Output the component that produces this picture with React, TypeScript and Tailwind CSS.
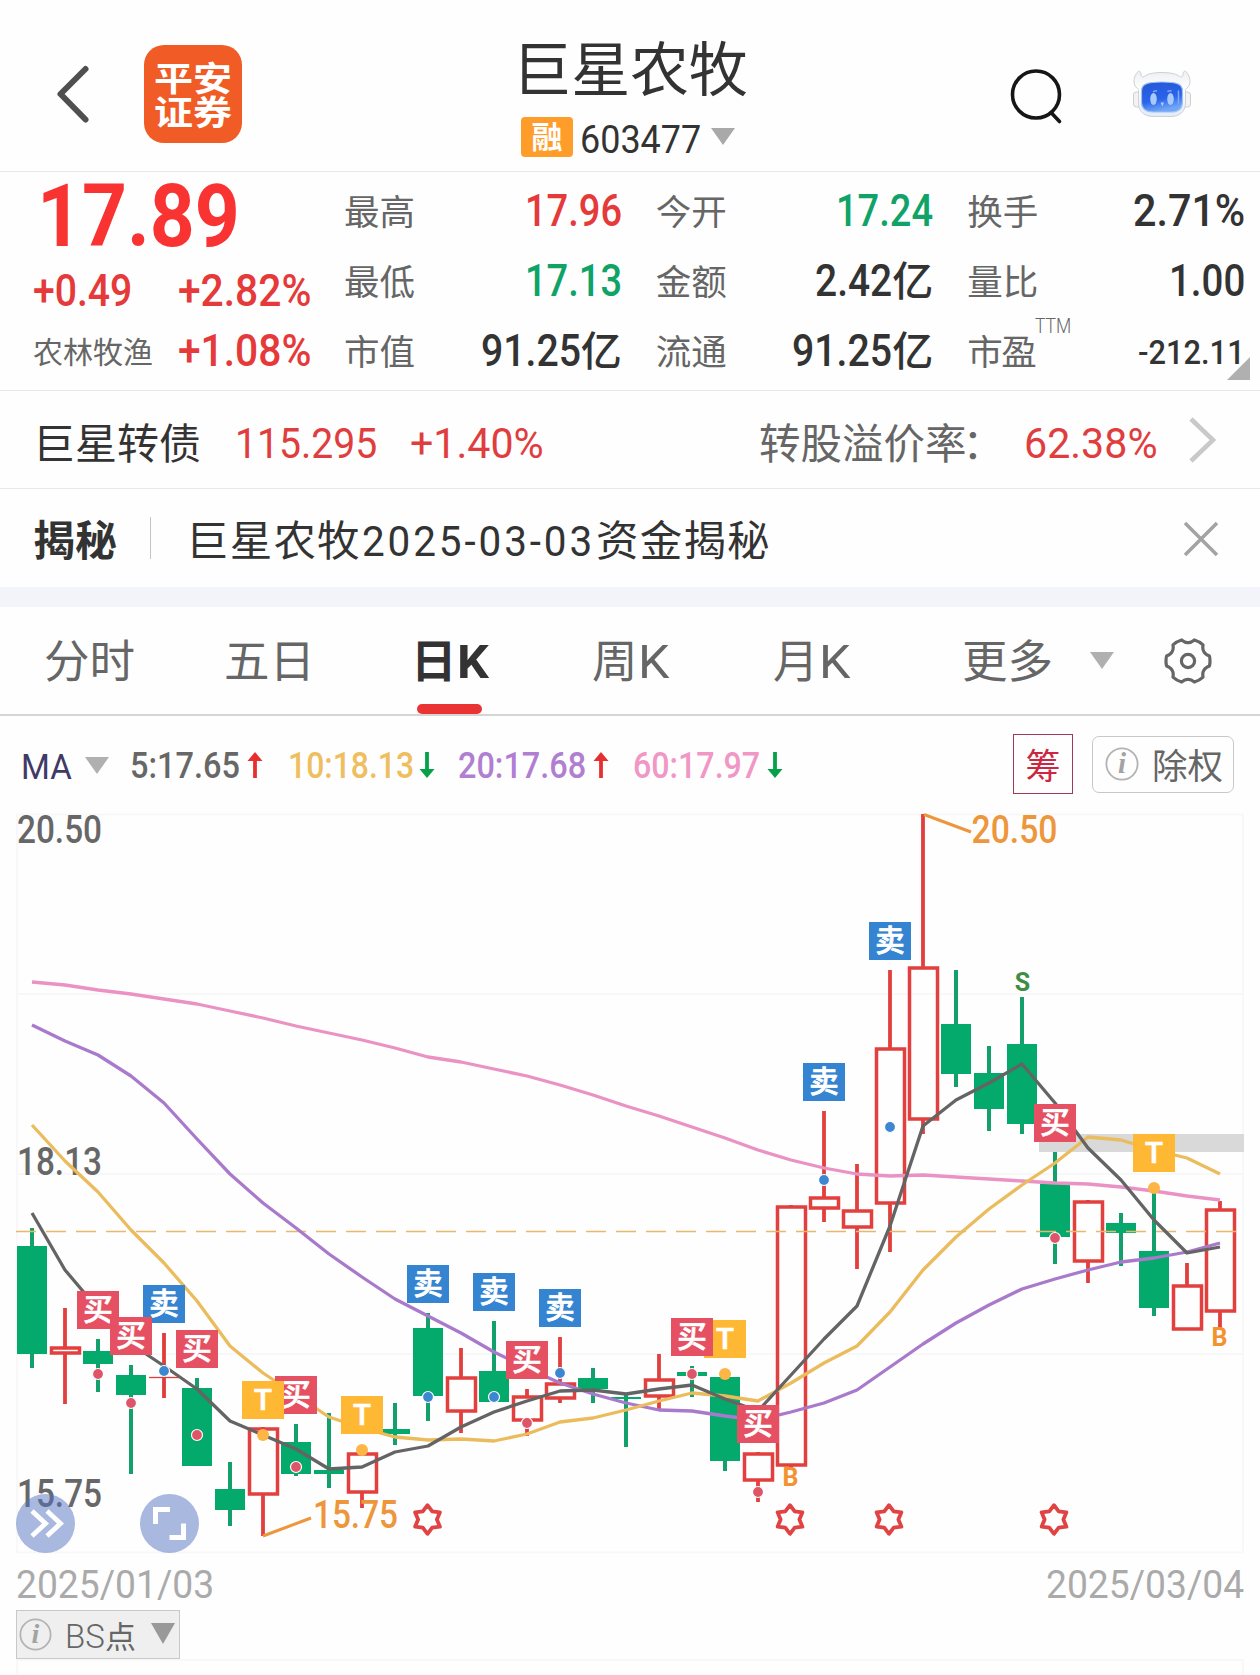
import { useLayoutEffect, useRef, type ReactNode } from "react";

/* Single line of text, condensed or widened so that it fills the width of its box. */
function Fit({ className = "", children }: { className?: string; children: ReactNode }) {
  const box = useRef<HTMLSpanElement>(null);
  const text = useRef<HTMLSpanElement>(null);
  useLayoutEffect(() => {
    if (!box.current || !text.current) return;
    const natural = text.current.offsetWidth;
    if (natural > 0) text.current.style.transform = `scaleX(${box.current.clientWidth / natural})`;
  }, [children]);
  return (
    <span ref={box} className={`block shrink-0 leading-none ${className}`}>
      <span ref={text} className="inline-block origin-left align-top whitespace-nowrap">
        {children}
      </span>
    </span>
  );
}

function Triangle({ className = "" }: { className?: string }) {
  return (
    <svg viewBox="0 0 24 17" className={`h-[17px] w-6 shrink-0 ${className}`}>
      <path d="M0 0h24L12 17z" fill="currentColor" />
    </svg>
  );
}

function InfoIcon({ className = "" }: { className?: string }) {
  return (
    <svg viewBox="0 0 34 34" className={`shrink-0 ${className}`} fill="none">
      <circle cx="17" cy="17" r="15.6" stroke="#b3b3b3" strokeWidth="1.800" />
      <text x="17" y="26" textAnchor="middle" fontFamily="Liberation Serif, serif" fontStyle="italic" fontWeight="bold" fontSize="29" fill="#a3a3a3">
        i
      </text>
    </svg>
  );
}

function gearPath() {
  const pt = (deg: number, r: number) => {
    const a = (deg * Math.PI) / 180;
    return `${(24 + r * Math.sin(a)).toFixed(2)} ${(24 - r * Math.cos(a)).toFixed(2)}`;
  };
  let d = "";
  for (let k = 0; k < 6; k++) {
    const n = k * 60;
    d += `${k ? "L" : "M"}${pt(n - 17, 22)}Q${pt(n - 9, 18.4)} ${pt(n, 18.4)}Q${pt(n + 9, 18.4)} ${pt(n + 17, 22)}`;
    d += `Q${pt(n + 30, 22.6)} ${pt(n + 43, 22)}`;
  }
  return d + "Z";
}

function Robot() {
  return (
    <svg viewBox="0 0 60 50" className="h-[50px] w-[60px]" fill="none">
      <defs>
        <linearGradient id="face" x1="0" y1="0" x2="0.3" y2="1">
          <stop offset="0" stopColor="#2457d4" />
          <stop offset="0.65" stopColor="#2964ea" />
          <stop offset="1" stopColor="#6fa6f6" />
        </linearGradient>
        <linearGradient id="shell" x1="0" y1="0" x2="0" y2="1">
          <stop offset="0" stopColor="#eeeff2" />
          <stop offset="0.4" stopColor="#ffffff" />
          <stop offset="1" stopColor="#e2ebf8" />
        </linearGradient>
      </defs>
      <rect x="1.500" y="23" width="9" height="15" rx="3" fill="#f7f2f2" stroke="#d0cdd1" />
      <rect x="49.500" y="23" width="9" height="15" rx="3" fill="#f7f2f2" stroke="#d0cdd1" />
      <path
        d="M6 2.500C1 8 .5 16 5.500 19.500C7 20 6.500 22 6.500 25V35C7 43 13 47.500 21 47.500H39C47 47.500 53 43 53.500 35V25C53.500 22 53 20 54.500 19.500C59.500 16 59 8 54 2.500C52 1.500 51 3 51 6C50.500 9 48 8 46 6.500C41 2.500 19 2.500 14 6.500C12 8 9.500 9 9 6C9 3 8 1.500 6 2.500Z"
        fill="url(#shell)"
        stroke="#cdd1d8"
      />
      <path d="M9.500 22C9.500 15 15 13 30 13S50.500 15 50.500 22V33C50.500 40 46 43 39 43H21C14 43 9.500 40 9.500 33Z" fill="url(#face)" stroke="#9fc0f2" strokeWidth="1.200" />
      <ellipse cx="21.500" cy="30" rx="3.300" ry="6" fill="#a9c9fa" />
      <ellipse cx="38.500" cy="30" rx="3.300" ry="6" fill="#a9c9fa" />
      <path d="M28.500 33.500h3.500l-1.700 4z" fill="#a9cbfb" />
      <path d="M46.500 22v12M21.500 22.500l3-.8M39 21.800l-3 .5" stroke="#7fa9f5" strokeWidth="1.500" strokeLinecap="round" />
    </svg>
  );
}

function Stat({ label, children }: { label: ReactNode; children: ReactNode }) {
  return (
    <div className="flex h-[70px] items-center justify-between">
      <span className="mt-[5px] -ml-px text-[35.500px] leading-none font-normal whitespace-nowrap text-[#666]">{label}</span>
      <div className="mt-[2px] flex">{children}</div>
    </div>
  );
}

function Arrow({ up = false, className = "" }: { up?: boolean; className?: string }) {
  return (
    <svg viewBox="0 0 16 26" className={`h-[26px] w-4 shrink-0 ${className}`} fill="none">
      {up ? (
        <path d="M8 26V6" stroke="#e6302f" strokeWidth="3.800" />
      ) : (
        <path d="M8 0V20" stroke="#06a048" strokeWidth="3.800" />
      )}
      {up ? <path d="M0.500 9L8 0L15.500 9Z" fill="#e6302f" /> : <path d="M0.500 17L8 26L15.500 17Z" fill="#06a048" />}
    </svg>
  );
}

type Candle = [up: 0 | 1, high: number, top: number, bottom: number, low: number];

const candles: Candle[] = [
  [0, 1228, 1246, 1354, 1368],
  [1, 1308, 1346, 1354, 1404],
  [0, 1339, 1351, 1364, 1392],
  [0, 1365, 1375, 1395, 1474],
  [1, 1333, 1377, 1378, 1398],
  [0, 1378, 1388, 1466, 1466],
  [0, 1462, 1489, 1510, 1526],
  [1, 1427, 1427, 1495, 1536],
  [0, 1424, 1442, 1474, 1476],
  [0, 1413, 1470, 1474, 1488],
  [1, 1452, 1452, 1493, 1508],
  [0, 1403, 1429, 1434, 1445],
  [0, 1313, 1328, 1396, 1421],
  [1, 1348, 1376, 1412, 1433],
  [0, 1321, 1371, 1402, 1402],
  [1, 1389, 1395, 1421, 1436],
  [1, 1337, 1382, 1399, 1403],
  [0, 1368, 1378, 1389, 1403],
  [0, 1393, 1397, 1399, 1447],
  [1, 1354, 1378, 1397, 1410],
  [0, 1366, 1372, 1376, 1397],
  [0, 1377, 1377, 1461, 1471],
  [1, 1452, 1452, 1481, 1502],
  [1, 1205, 1205, 1466, 1468],
  [1, 1111, 1196, 1209, 1222],
  [1, 1164, 1209, 1228, 1269],
  [1, 970, 1047, 1204, 1252],
  [1, 814, 966, 1120, 1134],
  [0, 970, 1024, 1074, 1087],
  [0, 1046, 1073, 1109, 1131],
  [0, 997, 1044, 1124, 1134],
  [0, 1152, 1184, 1237, 1264],
  [1, 1200, 1200, 1262, 1283],
  [0, 1213, 1223, 1233, 1266],
  [0, 1190, 1251, 1308, 1316],
  [1, 1263, 1284, 1330, 1330],
  [1, 1201, 1208, 1312, 1328],
];

const averages = [
  {
    color: "#ea92c3",
    ys: [982, 985, 990, 994, 999, 1004, 1011, 1018, 1026, 1033, 1040, 1048, 1057, 1062, 1069, 1076, 1085, 1095, 1106, 1116, 1127, 1138, 1150, 1160, 1168, 1174, 1176, 1175, 1177, 1179, 1181, 1183, 1184, 1187, 1191, 1196, 1200],
  },
  {
    color: "#a97acb",
    ys: [1025, 1041, 1055, 1076, 1103, 1139, 1174, 1203, 1228, 1254, 1277, 1299, 1316, 1333, 1352, 1368, 1383, 1394, 1403, 1410, 1411, 1416, 1420, 1412, 1403, 1390, 1367, 1344, 1323, 1305, 1289, 1279, 1270, 1262, 1258, 1252, 1243],
  },
  {
    color: "#ebbc5d",
    ys: [1125, 1161, 1192, 1230, 1263, 1301, 1346, 1373, 1395, 1417, 1428, 1437, 1440, 1439, 1441, 1434, 1422, 1418, 1410, 1401, 1393, 1396, 1401, 1383, 1363, 1346, 1312, 1270, 1237, 1209, 1185, 1163, 1137, 1140, 1150, 1158, 1174],
  },
  {
    color: "#646464",
    ys: [1213, 1270, 1309, 1344, 1366, 1389, 1421, 1435, 1449, 1469, 1467, 1452, 1446, 1427, 1412, 1401, 1391, 1390, 1394, 1389, 1385, 1399, 1411, 1375, 1339, 1306, 1226, 1126, 1100, 1083, 1064, 1103, 1148, 1180, 1220, 1253, 1247],
  },
];

const cx = (i: number) => 32 + i * 33;

type Tag = [index: number, top: number, kind: "买" | "卖" | "T"];
const tags: Tag[] = [
  [2, 1291, "买"],
  [4, 1285, "卖"],
  [3, 1317, "买"],
  [5, 1330, "买"],
  [8, 1376, "买"],
  [7, 1381, "T"],
  [10, 1396, "T"],
  [12, 1265, "卖"],
  [14, 1273, "卖"],
  [16, 1289, "卖"],
  [15, 1341, "买"],
  [21, 1320, "T"],
  [20, 1318, "买"],
  [22, 1405, "买"],
  [24, 1063, "卖"],
  [26, 922, "卖"],
  [31, 1104, "买"],
  [34, 1134, "T"],
];
const tagColor = { 买: "#e55063", 卖: "#3584d2", T: "#feb834" };

const dots: [number, number, "买" | "卖" | "T"][] = [
  [2, 1374, "买"],
  [3, 1403, "买"],
  [4, 1371, "卖"],
  [5, 1435, "买"],
  [7, 1435, "T"],
  [8, 1467, "买"],
  [10, 1450, "T"],
  [12, 1397, "卖"],
  [14, 1397, "卖"],
  [15, 1423, "买"],
  [16, 1373, "卖"],
  [20, 1374, "买"],
  [21, 1374, "T"],
  [22, 1492, "买"],
  [24, 1180, "卖"],
  [26, 1127, "卖"],
  [31, 1238, "买"],
  [34, 1188, "T"],
];
const dotColor = { 买: "#de5468", 卖: "#3d86d0", T: "#fdb546" };

function starPoints(x: number, y: number) {
  return Array.from({ length: 12 }, (_, k) => {
    const r = k % 2 ? 9.4 : 14.3;
    const a = (k * Math.PI) / 6;
    return `${(x + r * Math.sin(a)).toFixed(1)},${(y - r * Math.cos(a)).toFixed(1)}`;
  }).join(" ");
}

function Label({ x, y, w, color, children }: { x: number; y: number; w: number; color: string; children: string }) {
  return (
    <text x={x} y={y} fill={color} fontSize="38" fontWeight="500" textLength={w} lengthAdjust="spacingAndGlyphs">
      {children}
    </text>
  );
}

function KLineChart() {
  return (
    <svg viewBox="0 806 1260 754" className="block h-[754px] w-[1260px] font-[Roboto,'Noto_Sans_CJK_SC',sans-serif]" fill="none">
      <g stroke="#f8f8f8" strokeWidth="2">
        <path d="M17 814.500H1243V1552.500H17Z" />
        <path d="M17 994H1243M17 1174H1243M17 1354H1243" />
      </g>
      <rect x="1039" y="1134" width="205" height="18" fill="#d9d9d9" />
      <Label x={17} y={843} w={85} color="#676767">20.50</Label>
      <Label x={17} y={1175} w={85} color="#676767">18.13</Label>
      <Label x={17} y={1507} w={85} color="#676767">15.75</Label>
      {candles.map(([up, high, top, bottom, low], i) => {
        const x = cx(i);
        if (!up)
          return (
            <g key={i}>
              <path d={`M${x} ${high}V${low}`} stroke="#14a06a" strokeWidth="4" />
              <rect x={x - 15} y={top} width="30" height={bottom - top} fill="#03aa6b" />
            </g>
          );
        if (bottom - top < 2)
          return (
            <g key={i} stroke="#e03c3c">
              <path d={`M${x} ${high}V${low}`} strokeWidth="3.800" />
              <path d={`M${x - 15} ${top + 0.5}H${x + 15}`} strokeWidth="1.300" />
            </g>
          );
        return (
          <g key={i} stroke="#e2403e">
            <path d={`M${x} ${high}V${top + 2}M${x} ${bottom - 2}V${low}`} strokeWidth="3.800" />
            <rect x={x - 13.5} y={top + 2} width="28" height={bottom - top - 3} strokeWidth="3.500" />
          </g>
        );
      })}
      <path d="M16 1231.500H1236" stroke="#e8b96c" strokeWidth="1.400" strokeDasharray="20 10" />
      {averages.map(({ color, ys }) => (
        <polyline key={color} points={ys.map((y, i) => `${cx(i)},${y}`).join(" ")} stroke={color} strokeWidth="3.300" strokeLinejoin="round" />
      ))}
      {dots.map(([i, y, kind]) => (
        <circle key={i} cx={cx(i)} cy={y} r={kind === "T" ? 6 : 5.5} fill={dotColor[kind]} stroke={kind === "T" ? "none" : "#fff"} strokeWidth="1.200" />
      ))}
      {tags.map(([i, top, kind]) => (
        <g key={i}>
          <rect x={cx(i) - 21} y={top} width="42" height="38" fill={tagColor[kind]} />
          <text x={cx(i)} y={kind === "T" ? top + 29 : top + 29} textAnchor="middle" fill="#fff" stroke="#fff" strokeWidth="0.700" fontSize="29.500" fontWeight="500">
            {kind}
          </text>
        </g>
      ))}
      <g stroke="#ee963b" strokeWidth="3">
        <path d="M924 814.500L971 832M263 1536L311 1518" />
      </g>
      <Label x={971.5} y={843} w={86} color="#ee963b">20.50</Label>
      <Label x={313} y={1528} w={85} color="#ee963b">15.75</Label>
      {[427.5, 790, 889, 1054].map((x) => (
        <polygon key={x} points={starPoints(x, 1519.5)} stroke="#e04343" strokeWidth="3.800" strokeLinejoin="round" />
      ))}
      <g fontWeight="700" fontSize="25" textAnchor="middle">
        <text x="790.500" y="1485.500" fill="#f4922e">B</text>
        <text x="1219.500" y="1345.500" fill="#f4922e">B</text>
        <text x="1022.500" y="990.500" fill="#3f8d43">S</text>
      </g>
    </svg>
  );
}

export default function App() {
  return (
    <main className="h-[1675px] w-[1260px] overflow-hidden bg-[#fefefe] font-[Roboto,'Noto_Sans_CJK_SC',sans-serif] text-[#333]">
      <header className="relative flex h-[172px] items-start border-b border-[#e8e8e8]">
        <svg viewBox="0 0 36 60" className="mt-16 ml-[55px] h-[60px] w-9" fill="none">
          <path d="M30.500 5L5.500 30L30.500 55.500" stroke="#4f4f4f" strokeWidth="6" strokeLinecap="round" strokeLinejoin="round" />
        </svg>
        <div className="mt-[45px] ml-[53px] flex h-[98px] w-[98px] flex-col items-center justify-center rounded-[20px] bg-[#f15b25] pt-[3px] text-[34px] font-bold text-white">
          <Fit className="w-[78px]">平安</Fit>
          <Fit className="w-[78px]">证券</Fit>
        </div>
        <div className="ml-[274px] flex w-[232px] flex-col items-center">
          <h1 className="mt-[41px] -ml-[4px] text-[59px] leading-[60px] tracking-[-0.200px] whitespace-nowrap">巨星农牧</h1>
          <div className="mt-[16px] flex h-10 w-full items-center pl-[5px]">
            <span className="flex h-10 w-[52px] items-center justify-center rounded-[4px] bg-[#ff9d2b] pt-[1px] text-[31px] leading-none font-bold text-white">融</span>
            <Fit className="mt-[5px] ml-[7px] w-[121px] text-[39.500px]">603477</Fit>
            <Triangle className="-mt-[2px] ml-[10px] text-[#a9a9a9]" />
          </div>
        </div>
        <svg viewBox="0 0 56 60" className="mt-[66px] ml-[260px] h-[60px] w-14" fill="none">
          <circle cx="28" cy="28.500" r="23.500" stroke="#161616" strokeWidth="3.600" />
          <path d="M43.500 47L51.500 55.500" stroke="#161616" strokeWidth="3.600" strokeLinecap="round" />
        </svg>
        <div className="mt-[69px] ml-[68px]">
          <Robot />
        </div>
      </header>

      <section className="relative flex h-[219px] border-b border-[#e8e8e8]">
        <div className="w-[345px] text-[#e5393a]">
          <div className="flex h-[88px] items-center pl-[37px]">
            <Fit className="w-[203px] text-[87px] font-bold text-[#f93232]">17.89</Fit>
          </div>
          <div className="flex h-[61px] items-center pt-[2px] pl-[33px] text-[43.500px] font-medium">
            <Fit className="w-[99px]">+0.49</Fit>
            <Fit className="ml-[46px] w-[133px]">+2.82%</Fit>
          </div>
          <div className="flex h-[59px] items-center pt-[2px] pl-[33px] text-[43.500px] font-medium">
            <span className="mt-[2px] w-[120px] text-[30px] leading-none font-normal whitespace-nowrap text-[#666]">农林牧渔</span>
            <Fit className="ml-[25px] w-[133px]">+1.08%</Fit>
          </div>
        </div>
        <div className="grid w-[900px] auto-rows-[70px] grid-cols-3 content-start gap-x-[35px] pt-1 text-[43.500px] font-medium">
          <Stat label="最高">
            <Fit className="w-[97px] text-[#e5393a]">17.96</Fit>
          </Stat>
          <Stat label="今开">
            <Fit className="w-[97px] text-[#10a368]">17.24</Fit>
          </Stat>
          <Stat label="换手">
            <Fit className="w-[112px]">2.71%</Fit>
          </Stat>
          <Stat label="最低">
            <Fit className="w-[97px] text-[#10a368]">17.13</Fit>
          </Stat>
          <Stat label="金额">
            <Fit className="w-[77px]">2.42</Fit>
            <span className="mt-[2px] text-[41px] leading-none">亿</span>
          </Stat>
          <Stat label="量比">
            <Fit className="w-[76px]">1.00</Fit>
          </Stat>
          <Stat label="市值">
            <Fit className="w-[100px]">91.25</Fit>
            <span className="mt-[2px] text-[41px] leading-none">亿</span>
          </Stat>
          <Stat label="流通">
            <Fit className="w-[100px]">91.25</Fit>
            <span className="mt-[2px] text-[41px] leading-none">亿</span>
          </Stat>
          <Stat
            label={
              <span className="flex w-[104px] items-start">
                <span className="w-[68px] tracking-[-1.500px]">市盈</span>
                <Fit className="-mt-[20px] w-[36px] text-[20px] font-light">TTM</Fit>
              </span>
            }
          >
            <Fit className="w-[107px] text-[34px]">-212.11</Fit>
          </Stat>
        </div>
        <svg viewBox="0 0 23 23" className="absolute right-[10px] bottom-[10px] h-[23px] w-[23px]">
          <path d="M23 0V23H0Z" fill="#b0b0b0" />
        </svg>
      </section>

      <section className="flex h-[98px] items-center border-b border-[#e8e8e8] pl-[33px] text-[#df3d3e]">
        <span className="mt-[10px] w-[168px] text-[42px] leading-none whitespace-nowrap text-[#333]">巨星转债</span>
        <Fit className="mt-[7px] ml-[34px] w-[142px] text-[43px]">115.295</Fit>
        <Fit className="mt-[7px] ml-[33px] w-[134px] text-[43px]">+1.40%</Fit>
        <span className="mt-[10px] ml-[215px] w-[265px] text-[41.500px] leading-none whitespace-nowrap text-[#666]">
          转股溢价率<span className="-ml-1">：</span>
        </span>
        <Fit className="mt-[7px] w-[134px] text-[43px]">62.38%</Fit>
        <svg viewBox="0 0 30 48" className="mt-[1px] ml-[29px] h-12 w-[30px]" fill="none">
          <path d="M4 3L26 24L4 45" stroke="#c9c9c9" strokeWidth="4.500" />
        </svg>
      </section>

      <section className="flex h-[98px] items-center pl-[33px]">
        <strong className="mt-[8px] w-[84px] text-[42px] leading-none font-bold whitespace-nowrap">揭秘</strong>
        <span className="ml-[33px] h-[42px] w-px bg-[#c4c4c4]" />
        <span className="mt-[9px] ml-[35px] w-[175px] text-[42.500px] leading-none tracking-[1.200px] whitespace-nowrap">巨星农牧</span>
        <Fit className="mt-[8px] ml-[1px] w-[233px] text-[42px] tracking-[3px]">2025-03-03</Fit>
        <span className="mt-[9px] ml-[1px] w-[175px] text-[42.500px] leading-none tracking-[1.200px] whitespace-nowrap">资金揭秘</span>
        <svg viewBox="0 0 36 36" className="mt-[2px] ml-[412px] h-9 w-9" fill="none">
          <path d="M2 2L34 34M34 2L2 34" stroke="#a3a3a3" strokeWidth="3.500" />
        </svg>
      </section>

      <div className="h-5 bg-[#f3f4f9]" />

      <nav className="flex h-[109px] items-center border-b-2 border-[#d5d5d5] pl-[44px] text-[45.500px] leading-none whitespace-nowrap text-[#666]">
        <span className="w-[180px] pt-[5px]">分时</span>
        <span className="w-[187px] pt-[5px]">五日</span>
        <span className="relative flex h-full w-[181px] items-center font-bold text-[#333]">
          <span className="pt-[5px]">日</span>
          <Fit className="mt-[2px] w-[32px] text-[47px]">K</Fit>
          <i className="absolute bottom-0 left-[6px] h-[10px] w-[65px] rounded-full bg-[#ea3434]" />
        </span>
        <span className="flex w-[181px] items-center">
          <span className="pt-[5px]">周</span>
          <Fit className="mt-[2px] w-[32px] text-[47px]">K</Fit>
        </span>
        <span className="flex w-[189px] items-center">
          <span className="pt-[5px]">月</span>
          <Fit className="mt-[2px] w-[32px] text-[47px]">K</Fit>
        </span>
        <span className="w-[128px] pt-[5px]">更多</span>
        <Triangle className="text-[#b0b0b0]" />
        <svg viewBox="0 0 48 48" className="ml-[50px] h-12 w-12" fill="none" stroke="#666" strokeLinejoin="round">
          <path d={gearPath()} strokeWidth="3.200" />
          <circle cx="24" cy="24" r="6.600" strokeWidth="3.200" />
        </svg>
      </nav>

      <div className="flex h-[90px] items-center pt-2 pl-[21px] text-[37.500px]">
        <Fit className="mt-[4px] w-[51px] text-[35px] text-[#3f3a66]">MA</Fit>
        <Triangle className="ml-[13px] text-[#b0b0b0]" />
        <Fit className="mt-[2px] ml-[21px] w-[110px] font-medium text-[#676767]">5:17.65</Fit>
        <Arrow up className="ml-[7px]" />
        <Fit className="mt-[2px] ml-[25px] w-[126px] font-medium text-[#efbe60]">10:18.13</Fit>
        <Arrow className="ml-[5px]" />
        <Fit className="mt-[2px] ml-[23px] w-[128px] font-medium text-[#b07fd2]">20:17.68</Fit>
        <Arrow up className="ml-[7px]" />
        <Fit className="mt-[2px] ml-[24px] w-[127px] font-medium text-[#f197c5]">60:17.97</Fit>
        <Arrow className="ml-[7px]" />
        <span className="-mt-[2px] ml-[230px] flex h-[60px] w-[60px] items-center justify-center border border-[#a03a54] pt-[7px] text-[35px] leading-none text-[#cc2742]">筹</span>
        <div className="-mt-[2px] ml-[19px] flex h-[57px] w-[142px] items-center rounded-[7px] border border-[#c8c8c8] pl-3">
          <InfoIcon className="h-[34px] w-[34px]" />
          <span className="mt-[8px] ml-[13px] text-[35.500px] leading-none whitespace-nowrap text-[#666]">除权</span>
        </div>
      </div>

      <div className="relative">
        <KLineChart />
        <button className="absolute top-[688px] left-4 flex h-[59px] w-[59px] items-center justify-center rounded-full bg-[#5472c0]/50">
          <svg viewBox="0 0 59 59" className="h-[59px] w-[59px]" fill="none" stroke="#fff" strokeWidth="4.800">
            <path d="M16 17L29.500 29.500L16 42M31 17L44.500 29.500L31 42" />
          </svg>
        </button>
        <button className="absolute top-[688px] left-[140px] flex h-[59px] w-[59px] items-center justify-center rounded-full bg-[#5472c0]/50">
          <svg viewBox="0 0 59 59" className="h-[59px] w-[59px]" fill="none" stroke="#fff" strokeWidth="5">
            <path d="M15.500 30V15.500H30M29.500 43.500H43.500V29.500" />
          </svg>
        </button>
      </div>

      <div className="flex h-[50px] items-center justify-between px-4 text-[39.500px] text-[#aaa]">
        <Fit className="w-[198px]">2025/01/03</Fit>
        <Fit className="w-[198px]">2025/03/04</Fit>
      </div>

      <div className="ml-4 flex h-[49px] w-[164px] items-center border border-[#c8c8c8] bg-[#efefef] pl-[2px] text-[#666]">
        <InfoIcon className="h-[33px] w-[33px]" />
        <Fit className="mt-[3px] ml-[13px] w-[40px] text-[33px] font-light">BS</Fit>
        <span className="mt-[5px] text-[31px] leading-none">点</span>
        <svg viewBox="0 0 24 21" className="-mt-[3px] ml-[15px] h-[21px] w-6">
          <path d="M0 0H24L12 21Z" fill="#999" />
        </svg>
      </div>
      <div className="ml-4 h-4 w-[1228px] border-x-2 border-t-2 border-[#f8f8f8]" />
    </main>
  );
}
